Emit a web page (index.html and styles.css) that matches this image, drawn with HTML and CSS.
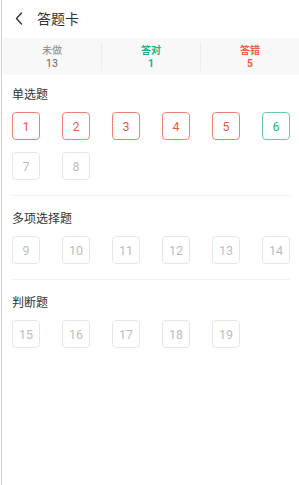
FILE: index.html
```html
<!DOCTYPE html>
<html lang="zh">
<head>
<meta charset="utf-8">
<link rel="stylesheet" href="styles.css">
</head>
<body>
<div class="page">
  <header class="header">
    <svg class="back" width="8" height="13" viewBox="0 0 8 13"><path d="M6.5 1 L1.5 6.5 L6.5 12" fill="none" stroke="#333" stroke-width="1.4" stroke-linecap="round" stroke-linejoin="round"/></svg>
    <span class="title">答题卡</span>
  </header>
  <div class="stats">
    <div class="stat"><span class="label">未做</span><span class="num">13</span></div>
    <div class="stat right-ok"><span class="label">答对</span><span class="num">1</span></div>
    <div class="stat right-bad"><span class="label">答错</span><span class="num">5</span></div>
  </div>
  <section class="sec first">
    <div class="sec-title">单选题</div>
    <div class="grid">
      <span class="box wrong">1</span><span class="box wrong">2</span><span class="box wrong">3</span><span class="box wrong">4</span><span class="box wrong">5</span><span class="box ok">6</span>
      <span class="box">7</span><span class="box">8</span>
    </div>
  </section>
  <section class="sec">
    <div class="sec-title">多项选择题</div>
    <div class="grid">
      <span class="box">9</span><span class="box">10</span><span class="box">11</span><span class="box">12</span><span class="box">13</span><span class="box">14</span>
    </div>
  </section>
  <section class="sec last">
    <div class="sec-title">判断题</div>
    <div class="grid">
      <span class="box">15</span><span class="box">16</span><span class="box">17</span><span class="box">18</span><span class="box">19</span>
    </div>
  </section>
</div>
</body>
</html>
```
FILE: styles.css
```css
html, body { margin: 0; padding: 0; background: #fff; }
body { font-family: "Noto Sans", Roboto, "Noto Sans CJK SC", sans-serif; }
.page {
  margin-left: 1px;
  border-left: 1px solid #cfcfcf;
  min-height: 485px;
  box-sizing: border-box;
}
.header {
  height: 38px;
  display: flex;
  align-items: center;
  padding-left: 13px;
  box-sizing: border-box;
}
.back { display: block; margin-top: -2px; }
.title {
  margin-left: 14px;
  font-size: 14px;
  color: #333;
  margin-top: -3px;
  font-family: "Noto Sans CJK SC", sans-serif;
}
.stats {
  margin-left: 1px;
  height: 37px;
  background: #f8f8f8;
  display: flex;
  align-items: center;
}
.stat {
  flex: 1;
  display: flex;
  flex-direction: column;
  align-items: center;
  justify-content: center;
  gap: 1px;
  color: #888;
  border-left: 1px solid #ececec;
  height: 28px;
}
.stat:first-child { border-left: none; }
.stat .label {
  font-size: 10px;
  line-height: 13px;
  font-family: "Noto Sans CJK SC", sans-serif;
}
.stat .num {
  font-size: 10.5px;
  line-height: 13px;
  color: #666;
  font-family: Roboto, sans-serif;
}
.right-ok .label, .right-ok .num { color: #1fb285; font-weight: 700; }
.right-bad .label, .right-bad .num { color: #f05b47; font-weight: 700; }
.sec {
  margin: 0 9px 0 10px;
  padding: 13px 0 15px;
  border-bottom: 1px solid #f1f1f1;
}
.sec.first { padding-top: 10px; }
.sec.last { border-bottom: none; }
.sec-title {
  font-size: 12px;
  line-height: 17px;
  color: #333;
  margin-bottom: 10px;
  font-family: "Noto Sans CJK SC", sans-serif;
}
.grid {
  display: grid;
  grid-template-columns: repeat(6, 28px);
  column-gap: 22px;
  row-gap: 12px;
}
.box {
  width: 28px;
  height: 28px;
  box-sizing: border-box;
  border: 1px solid #e6e6e6;
  border-radius: 4px;
  display: flex;
  align-items: center;
  justify-content: center;
  font-size: 12.5px;
  color: #bdbdbd;
  font-family: Roboto, "Noto Sans", sans-serif;
}
.box.wrong { border-color: #f08272; color: #ef5a45; }
.box.ok { border-color: #66cbaa; color: #1fb285; }
```
